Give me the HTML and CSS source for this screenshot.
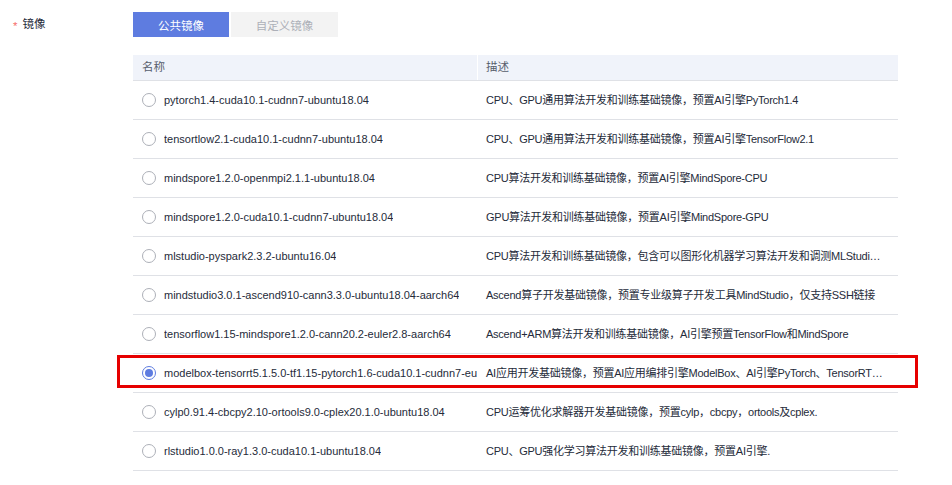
FILE: index.html
```html
<!DOCTYPE html>
<html lang="zh-CN">
<head>
<meta charset="utf-8">
<title>镜像</title>
<link rel="stylesheet" href="styles.css">
</head>
<body>
<div class="form-row">
  <div class="label"><span class="req">*</span>镜像</div>
  <div class="field">
    <div class="tabs">
      <button class="tab active">公共镜像</button>
      <button class="tab">自定义镜像</button>
    </div>
    <div class="table">
      <div class="thead">
        <div class="th">名称</div>
        <div class="th th-desc">描述</div>
      </div>
      <div class="tr"><div class="td name"><span class="radio"></span><span class="txt">pytorch1.4-cuda10.1-cudnn7-ubuntu18.04</span></div><div class="td desc">CPU、GPU通用算法开发和训练基础镜像，预置AI引擎PyTorch1.4</div></div>
      <div class="tr"><div class="td name"><span class="radio"></span><span class="txt">tensortlow2.1-cuda10.1-cudnn7-ubuntu18.04</span></div><div class="td desc">CPU、GPU通用算法开发和训练基础镜像，预置AI引擎TensorFlow2.1</div></div>
      <div class="tr"><div class="td name"><span class="radio"></span><span class="txt">mindspore1.2.0-openmpi2.1.1-ubuntu18.04</span></div><div class="td desc">CPU算法开发和训练基础镜像，预置AI引擎MindSpore-CPU</div></div>
      <div class="tr"><div class="td name"><span class="radio"></span><span class="txt">mindspore1.2.0-cuda10.1-cudnn7-ubuntu18.04</span></div><div class="td desc">GPU算法开发和训练基础镜像，预置AI引擎MindSpore-GPU</div></div>
      <div class="tr"><div class="td name"><span class="radio"></span><span class="txt">mlstudio-pyspark2.3.2-ubuntu16.04</span></div><div class="td desc">CPU算法开发和训练基础镜像，包含可以图形化机器学习算法开发和调测MLStudio工具</div></div>
      <div class="tr"><div class="td name"><span class="radio"></span><span class="txt">mindstudio3.0.1-ascend910-cann3.3.0-ubuntu18.04-aarch64</span></div><div class="td desc">Ascend算子开发基础镜像，预置专业级算子开发工具MindStudio，仅支持SSH链接</div></div>
      <div class="tr"><div class="td name"><span class="radio"></span><span class="txt">tensorflow1.15-mindspore1.2.0-cann20.2-euler2.8-aarch64</span></div><div class="td desc">Ascend+ARM算法开发和训练基础镜像，AI引擎预置TensorFlow和MindSpore</div></div>
      <div class="tr selected"><div class="td name"><span class="radio on"></span><span class="txt">modelbox-tensorrt5.1.5.0-tf1.15-pytorch1.6-cuda10.1-cudnn7-euler2.8</span></div><div class="td desc">AI应用开发基础镜像，预置AI应用编排引擎ModelBox、AI引擎PyTorch、TensorRT和TensorFlow</div></div>
      <div class="tr"><div class="td name"><span class="radio"></span><span class="txt">cylp0.91.4-cbcpy2.10-ortools9.0-cplex20.1.0-ubuntu18.04</span></div><div class="td desc">CPU运筹优化求解器开发基础镜像，预置cylp，cbcpy，ortools及cplex.</div></div>
      <div class="tr"><div class="td name"><span class="radio"></span><span class="txt">rlstudio1.0.0-ray1.3.0-cuda10.1-ubuntu18.04</span></div><div class="td desc">CPU、GPU强化学习算法开发和训练基础镜像，预置AI引擎.</div></div>
    </div>
  </div>
</div>
</body>
</html>
```
FILE: styles.css
```css
html, body {
  margin: 0;
  padding: 0;
  background: #ffffff;
}
body {
  font-family: "Liberation Sans", "Noto Sans CJK SC", sans-serif;
  font-size: 11px;
  color: #252b3a;
}
.form-row {
  display: flex;
  padding: 12px 0 0 13px;
}
.label {
  width: 120px;
  line-height: 25px;
  font-size: 11.5px;
  color: #252b3a;
}
.req {
  display: inline-block;
  color: #f66f6a;
  margin-right: 5px;
  vertical-align: -2px;
}
.field {
  display: flex;
  flex-direction: column;
}
.tabs {
  display: flex;
  gap: 2px;
}
.tab {
  font-family: inherit;
  font-size: 11.5px;
  border: 0;
  height: 25px;
  padding: 0;
  background: #f3f3f3;
  color: #adb0b8;
  width: 107px;
}
.tab.active {
  background: #5e7ce0;
  color: #ffffff;
  width: 96px;
}
.table {
  margin-top: 18px;
  width: 765px;
}
.thead {
  display: grid;
  grid-template-columns: 344px 421px;
  height: 25px;
  background: #f0f3fa;
  border-bottom: 1px solid #dfe1e6;
}
.th {
  line-height: 25px;
  padding-left: 9px;
  font-size: 11.5px;
  color: #575d6c;
}
.th-desc {
  border-left: 1px solid #ffffff;
  padding-left: 8px;
}
.tr {
  position: relative;
  display: grid;
  grid-template-columns: 344px 421px;
  height: 38px;
  border-bottom: 1px solid #dfe1e6;
}
.td {
  display: flex;
  align-items: center;
  overflow: hidden;
  white-space: nowrap;
}
.name {
  padding-left: 9px;
}
.radio {
  flex: none;
  box-sizing: border-box;
  width: 14px;
  height: 14px;
  border: 1px solid #adb0b8;
  border-radius: 50%;
  margin-right: 8px;
  position: relative;
}
.radio.on {
  border-color: #5e7ce0;
}
.radio.on::after {
  content: "";
  position: absolute;
  left: 2px;
  top: 2px;
  width: 8px;
  height: 8px;
  border-radius: 50%;
  background: #5e7ce0;
}
.txt {
  overflow: hidden;
}
.desc {
  display: block;
  padding: 0 14px 0 9px;
  line-height: 38px;
  letter-spacing: -0.25px;
  text-overflow: ellipsis;
}
.tr.selected::after {
  content: "";
  position: absolute;
  left: -16px;
  top: 1px;
  width: 801px;
  height: 33px;
  box-sizing: border-box;
  border: 3px solid #e60000;
  pointer-events: none;
}
```
